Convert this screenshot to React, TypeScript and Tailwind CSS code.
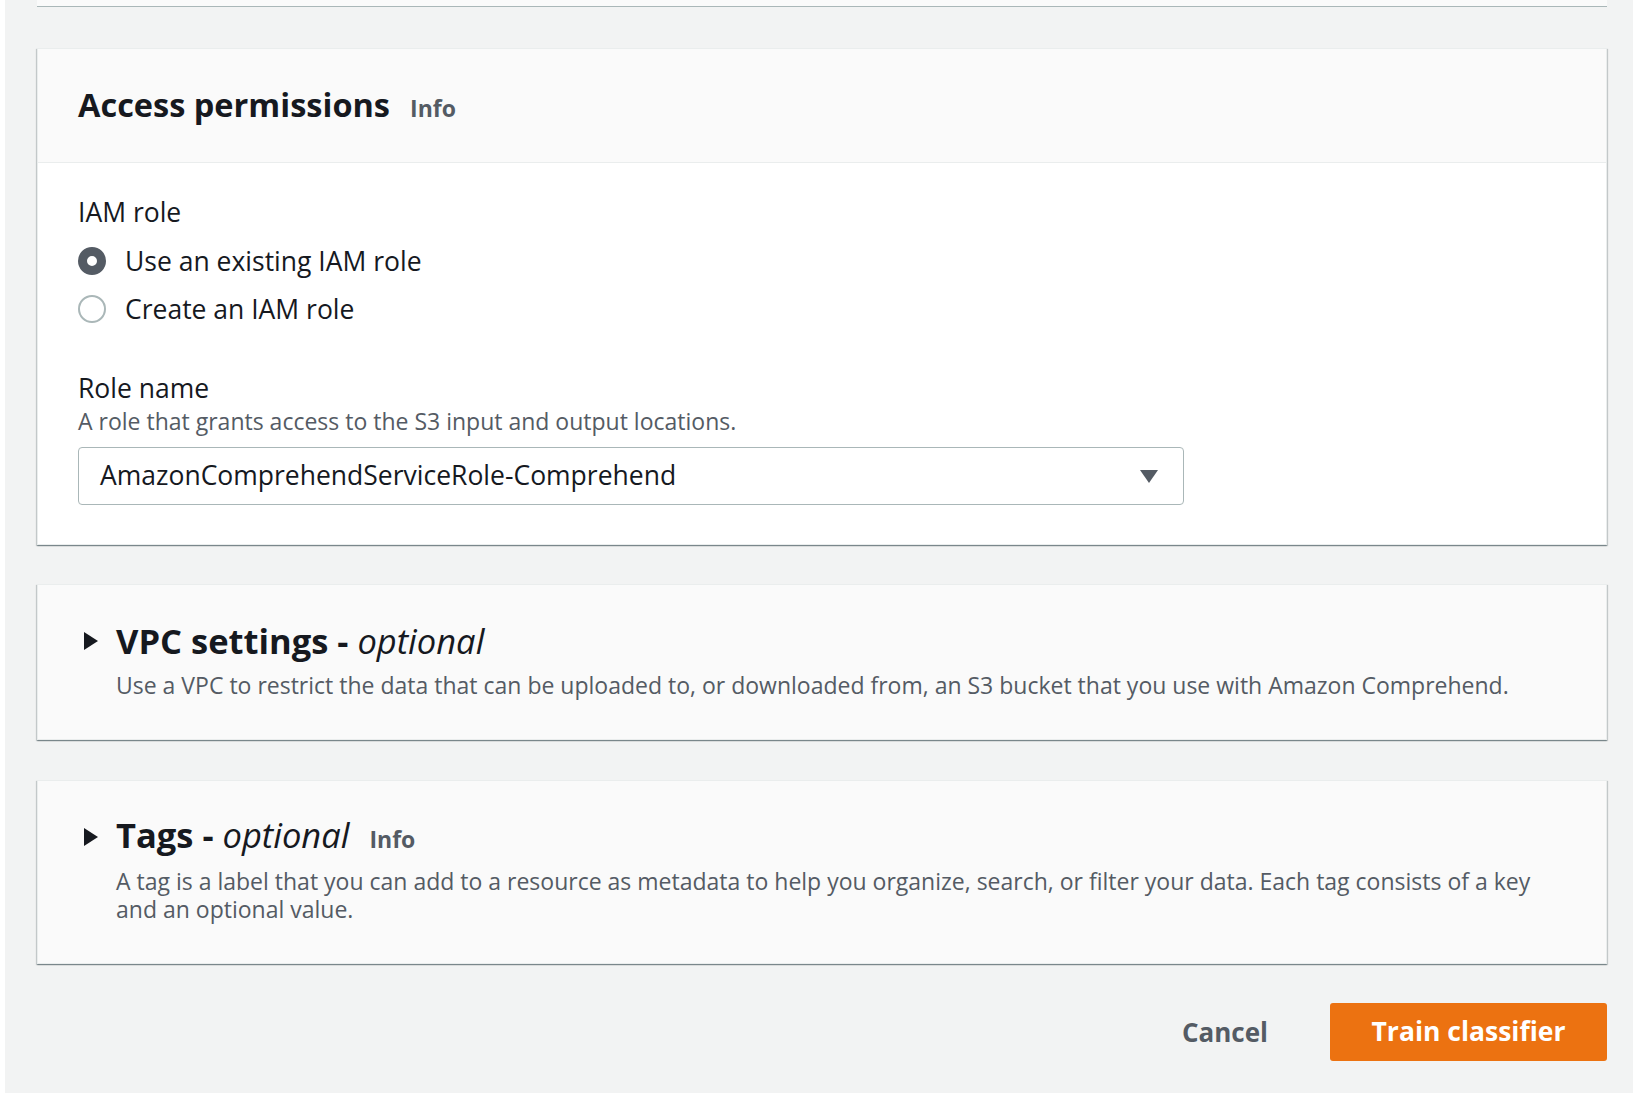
const FONT = { fontFamily: '"Open Sans", "Noto Sans", sans-serif' };

function Radio({ checked, label }: { checked?: boolean; label: string }) {
  return (
    <label className="flex items-center h-[48px] gap-[19px]">
      <span
        className={
          checked
            ? "w-[28px] h-[28px] rounded-full border-[9px] border-[#545b64] bg-white"
            : "w-[28px] h-[28px] rounded-full border-2 border-[#aab7b8] bg-white"
        }
      />
      <span className="text-[26.5px] leading-[32px] text-[#16191f]">{label}</span>
    </label>
  );
}

function Caret() {
  return (
    <svg width="18" height="22" viewBox="0 0 18 22" className="shrink-0">
      <path d="M2 2 L16 11 L2 20 Z" fill="#16191f" />
    </svg>
  );
}

function CollapsedSection({
  title,
  info,
  children,
}: {
  title: string;
  info?: boolean;
  children: React.ReactNode;
}) {
  return (
    <section className="bg-[#fafafa] border border-[#eaeded] shadow-[0_1px_1px_0_rgba(0,28,36,0.3),1px_1px_1px_0_rgba(0,28,36,0.15),-1px_1px_1px_0_rgba(0,28,36,0.15)] pl-[44px] pr-[40px] pt-[36px] pb-[40px]">
      <div className="flex items-center gap-[16px] h-[40px]">
        <Caret />
        <h2 className="text-[34.5px] leading-[40px] font-bold text-[#16191f] flex items-baseline whitespace-nowrap">
          {title} -&nbsp;<em className="font-normal">optional</em>
          {info && (
            <span className="ml-[20px] text-[23px] font-bold text-[#545b64] not-italic">Info</span>
          )}
        </h2>
      </div>
      <p className="ml-[34px] mt-[10px] text-[23px] leading-[28px] text-[#545b64]">{children}</p>
    </section>
  );
}

export default function App() {
  return (
    <div className="min-h-screen bg-white pl-[5px] pr-[6px] pb-[7px]" style={FONT}>
      <div className="bg-[#f2f3f3] h-[1093px] pl-[32px] pr-[26px]">
        {/* bottom edge of the previous panel */}
        <div className="h-[7px] bg-[#fafafa] border-b border-[#aab7b8]" />

        <section className="mt-[41px] bg-white border border-[#eaeded] shadow-[0_1px_1px_0_rgba(0,28,36,0.3),1px_1px_1px_0_rgba(0,28,36,0.15),-1px_1px_1px_0_rgba(0,28,36,0.15)]">
          <div className="h-[114px] bg-[#fafafa] border-b border-[#eaeded] px-[40px] flex items-center">
            <h2 className="text-[32.5px] font-bold text-[#16191f] flex items-baseline">
              Access permissions
              <span className="ml-[20px] text-[23px] font-bold text-[#545b64]">Info</span>
            </h2>
          </div>

          <div className="px-[40px] pt-[33px] pb-[39px]">
            <div className="text-[26.5px] leading-[32px] text-[#16191f]">IAM role</div>
            <div className="mt-[9px] flex flex-col">
              <Radio checked label="Use an existing IAM role" />
              <Radio label="Create an IAM role" />
            </div>

            <div className="mt-[39px] text-[26.5px] leading-[32px] text-[#16191f]">Role name</div>
            <div className="mt-[4px] text-[23px] leading-[26px] text-[#545b64]">
              A role that grants access to the S3 input and output locations.
            </div>
            <div className="mt-[13px] w-[1106px] h-[58px] border border-[#aab7b8] rounded-[4px] bg-white flex items-center justify-between pl-[21px] pr-[24px]">
              <span className="text-[26.5px] text-[#16191f]">AmazonComprehendServiceRole-Comprehend</span>
              <svg width="20" height="16" viewBox="0 0 20 16">
                <path d="M1 2 L19 2 L10 15 Z" fill="#545b64" />
              </svg>
            </div>
          </div>
        </section>

        <div className="mt-[39px]">
          <CollapsedSection title="VPC settings">
            Use a VPC to restrict the data that can be uploaded to, or downloaded from, an S3 bucket that you use with Amazon Comprehend.
          </CollapsedSection>
        </div>

        <div className="mt-[40px]">
          <CollapsedSection title="Tags" info>
            A tag is a label that you can add to a resource as metadata to help you organize, search, or filter your data. Each tag consists of a key and an optional value.
          </CollapsedSection>
        </div>

        <div className="mt-[39px] flex justify-end items-center gap-[20px]">
          <button className="h-[58px] px-[42px] text-[26px] font-bold text-[#545b64]">Cancel</button>
          <button className="h-[58px] w-[277px] rounded-[3px] bg-[#ec7211] text-[26.5px] font-bold text-white">
            Train classifier
          </button>
        </div>
      </div>
    </div>
  );
}
